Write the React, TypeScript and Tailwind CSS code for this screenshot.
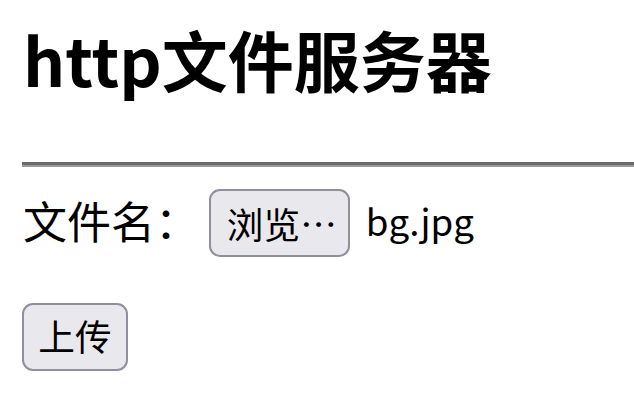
export default function App() {
  return (
    <div
      className="w-[634px] h-[411px] bg-white text-black overflow-hidden"
      style={{ fontFamily: '"Noto Sans CJK SC", "Noto Sans", sans-serif' }}
    >
      <div className="pl-[23px] pt-[25px]">
        <h1 className="text-[66px] font-bold leading-[66px] whitespace-nowrap">http文件服务器</h1>
      </div>
      <div className="mt-[71px] ml-[22px] border-t-[3px] border-b-[2px] border-t-[#6a6a6a] border-b-[#9a9a9a]" />
      <div className="pl-[23px] mt-[22px] flex items-center h-[68px]">
        <span className="text-[44px] leading-[44px] pb-[6px] whitespace-pre">文件名： </span>
        <span className="h-[68px] w-[141px] pl-[16px] flex items-center rounded-[11px] border-2 border-[#8f8f9d] bg-[#e9e9ed] text-[36.67px] leading-[44px]">
          浏览…
        </span>
        <span className="ml-[16px] text-[36.67px] leading-[44px] pb-[6px]">bg.jpg</span>
      </div>
      <div className="pl-[22px] mt-[46px]">
        <button className="h-[68px] w-[106px] pb-[4px] flex items-center justify-center rounded-[11px] border-2 border-[#8f8f9d] bg-[#e9e9ed] text-[36.67px] leading-[44px]">
          上传
        </button>
      </div>
    </div>
  );
}
